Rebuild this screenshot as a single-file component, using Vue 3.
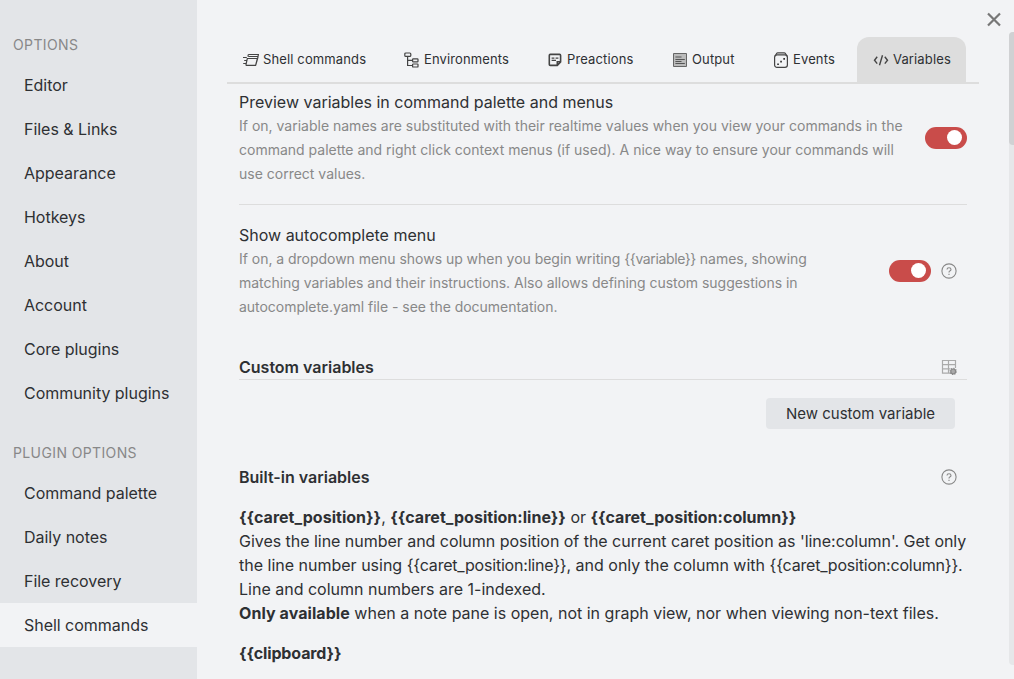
<script setup>
const groups = [
  { title: 'Options', items: ['Editor', 'Files & Links', 'Appearance', 'Hotkeys', 'About', 'Account', 'Core plugins', 'Community plugins'] },
  { title: 'Plugin options', items: ['Command palette', 'Daily notes', 'File recovery', 'Shell commands'] },
]
const selected = 'Shell commands'
const tabs = ['Shell commands', 'Environments', 'Preactions', 'Output', 'Events', 'Variables']
const activeTab = 'Variables'
const previewLines = [
  'If on, variable names are substituted with their realtime values when you view your commands in the',
  'command palette and right click context menus (if used). A nice way to ensure your commands will',
  'use correct values.',
]
const autocompleteLines = [
  'If on, a dropdown menu shows up when you begin writing {{variable}} names, showing',
  'matching variables and their instructions. Also allows defining custom suggestions in',
  'autocomplete.yaml file - see the documentation.',
]
const caretNames = ['{{caret_position}}', '{{caret_position:line}}', '{{caret_position:column}}']
const caretLines = [
  "Gives the line number and column position of the current caret position as 'line:column'. Get only",
  'the line number using {{caret_position:line}}, and only the column with {{caret_position:column}}.',
  'Line and column numbers are 1-indexed.',
]
const clipboardName = '{{clipboard}}'

// Splits a line so that every {{variable}} becomes a part of its own.
const parts = (line) => line.split(/(\{\{[^}]+\}\})/)
const isVariable = (part) => part.startsWith('{{')
</script>

<template>
  <div class="settings">
    <nav class="sidebar">
      <section v-for="g in groups" :key="g.title" class="group">
        <div class="group-title">{{ g.title }}</div>
        <div v-for="item in g.items" :key="item" class="nav-item" :class="{ selected: item === selected }">{{ item }}</div>
      </section>
    </nav>

    <main class="content">
      <div class="tabs">
        <div v-for="(tab, i) in tabs" :key="tab" class="tab" :class="['tab-' + i, { active: tab === activeTab }]">
          <svg v-if="i === 0" class="icon" width="16" height="16" viewBox="0 0 16 16">
            <path d="M5.3 2.5H15.4L14.6 6.5M5.3 4.5H15M5.3 2.5L4.9 4.5M4.3 6.5H14.4L12.6 13.3H3.4Q2.8 13.3 3 12.5ZM12.9 12.6L15 5M0 5.5H3.8M1.2 8.5H3.4M.2 11.5H3" />
          </svg>
          <svg v-else-if="i === 1" class="icon" width="16" height="16" viewBox="0 0 16 16">
            <rect x=".8" y="1" width="6" height="3.4" rx="1" /><rect x="8.6" y="6.8" width="5.4" height="3" rx=".6" /><rect x="8.6" y="12" width="5.4" height="3" rx=".6" />
            <path d="M3.6 4.4V13.5H8.6M3.6 8.3H8.6" />
          </svg>
          <svg v-else-if="i === 2" class="icon" width="16" height="16" viewBox="0 0 16 16">
            <path d="M3.3 2.4H12.6Q13.6 2.4 13.6 3.4V10L10.3 13.4H3.3Q2.3 13.4 2.3 12.4V3.4Q2.3 2.4 3.3 2.4ZM13.4 9.8H10.3V13.2" class="bold" /><path d="M4.6 6.2H7.4M8.6 6.2H11.4M4.6 8.4H9" />
          </svg>
          <svg v-else-if="i === 3" class="icon" width="16" height="16" viewBox="0 0 16 16">
            <path d="M1.5 1.5H14.5V14.5H1.5Z" class="sheet" />
            <path d="M3.4 5H9.5M3.4 7.5H12.8M3.4 9.5H9.5M3.4 11.5H12.8" class="rows" />
          </svg>
          <svg v-else-if="i === 4" class="icon" width="16" height="16" viewBox="0 0 16 16">
            <rect x="1.6" y="2.8" width="12.8" height="12.5" rx="2.4" /><path d="M2 4.2L3.6 1.5Q4 .8 4.8 .8H11.2Q12 .8 12.4 1.5L14 4.2" />
            <path d="M10.3 6h1.7v1.7h-1.7zM7.2 8.8h1.7v1.7H7.2zM4.2 11.4h1.7v1.7H4.2z" class="solid" />
          </svg>
          <svg v-else class="icon" width="16" height="16" viewBox="0 0 16 16">
            <path d="M4.2 4.8L1.5 8.2L4.2 11.6M11.8 4.8L14.5 8.2L11.8 11.6M9.5 3.2L6.5 13.2" class="code" />
          </svg>
          <span class="tab-label">{{ tab }}</span>
        </div>
      </div>

      <div class="pane">
        <div class="setting first">
          <div class="info">
            <div class="name">Preview variables in command palette and menus</div>
            <div v-for="line in previewLines" :key="line" class="desc">{{ line }}</div>
          </div>
          <div class="toggle"><i></i></div>
        </div>

        <div class="setting second">
          <div class="info">
            <div class="name">Show autocomplete menu</div>
            <div v-for="line in autocompleteLines" :key="line" class="desc tight"><span v-for="(part, n) in parts(line)" :key="n" :class="{ token: isVariable(part) }">{{ part }}</span></div>
          </div>
          <div class="toggle"><i></i></div>
          <svg class="help" width="16" height="16" viewBox="0 0 16 16">
            <circle cx="8" cy="8" r="7.1" /><path d="M6 6.5Q6 4.7 8 4.7T10 6.5Q10 7.5 8.8 8Q8 8.4 8 9.4M8 10.8V12" />
          </svg>
        </div>

        <div class="heading ruled">
          <span>Custom variables</span>
          <svg class="table-icon" width="16" height="16" viewBox="0 0 16 16">
            <path d="M9.5 14.2H1.5V1.5H14.5V9M1.5 5.7H14.5M1.5 9.8H9.5M7.5 1.5V14" />
            <circle cx="12.2" cy="12.4" r="2.4" class="gear" />
            <circle cx="12.2" cy="12.4" r="3.1" class="teeth" />
          </svg>
        </div>
        <div class="actions"><button class="new-button">New custom variable</button></div>

        <div class="heading">
          <span>Built-in variables</span>
          <svg class="help" width="16" height="16" viewBox="0 0 16 16">
            <circle cx="8" cy="8" r="7.1" /><path d="M6 6.5Q6 4.7 8 4.7T10 6.5Q10 7.5 8.8 8Q8 8.4 8 9.4M8 10.8V12" />
          </svg>
        </div>

        <div class="variable">
          <div class="names"><b>{{ caretNames[0] }}</b>, <b>{{ caretNames[1] }}</b> or <b>{{ caretNames[2] }}</b></div>
          <div v-for="(line, i) in caretLines" :key="line" :class="{ tight: i === 0 }"><span v-for="(part, n) in parts(line)" :key="n" :class="{ token: isVariable(part) }">{{ part }}</span></div>
          <div><b class="wide">Only available</b> when a note pane is open, not in graph view, nor when viewing non-text files.</div>
        </div>
        <div class="variable"><b class="clip">{{ clipboardName }}</b></div>
      </div>
    </main>

    <svg class="close" width="16" height="16" viewBox="0 0 16 16"><path d="M2 2.5L14 14.5M14 2.5L2 14.5" /></svg>
    <div class="scrollbar"><div class="thumb"></div></div>
  </div>
</template>

<style>
body { overflow: hidden; }
</style>

<style scoped>
.settings {
  position: relative;
  display: flex;
  width: 1014px;
  height: 679px;
  overflow: hidden;
  background: #f2f3f5;
  color: #2e3033;
  font: 400 16px/24px Inter, sans-serif;
  white-space: nowrap;
}
.sidebar { width: 197px; flex: none; box-sizing: border-box; padding-top: 27px; background: #e3e5e8; }
.group { margin-bottom: 20px; }
.group-title { height: 36px; padding-left: 13px; line-height: 36px; font-size: 14px; letter-spacing: .38px; text-transform: uppercase; color: #888; }
.nav-item { height: 44px; line-height: 44px; padding-left: 24px; letter-spacing: -.03px; }
.nav-item.selected { background: #f2f3f5; }
.content { flex: none; width: 752px; margin-left: 30px; }
.tabs { display: flex; height: 45px; margin-top: 37px; border-bottom: 2px solid #ddd; font-size: 13px; letter-spacing: .13px; }
.tab { display: flex; align-items: center; gap: 4px; box-sizing: border-box; padding-left: 16px; flex: none; }
.tab-label { margin-top: -2px; }
.tab-0 { width: 161px; }
.tab-1 { width: 143px; }
.tab-2 { width: 125px; }
.tab-3 { width: 101px; }
.tab-4 { width: 100px; }
.tab-5 { width: 109px; }
.tab.active { background: #ddd; border-radius: 12px 12px 0 0; }
.icon { flex: none; fill: none; stroke: #444; stroke-width: 1.2; }
.icon .bold { stroke-width: 1.6; }
.icon .sheet { fill: #bbb; stroke: #666; stroke-width: 1; }
.icon .rows { stroke: #555; stroke-width: 1; }
.icon .code { stroke-width: 1.4; }
.icon .solid { fill: #333; stroke: none; }
.pane { margin: 6px 12px 0; }
.setting { display: flex; align-items: center; height: 96px; }
.setting.first { padding-bottom: 18px; border-bottom: 1px solid #ddd; }
.setting.second { padding-top: 18px; padding-right: 10px; }
.info { flex: 1; width: 0; }
.desc { font-size: 14px; color: #888; }
.tight { letter-spacing: -.03px; }
.token { letter-spacing: -.2px; }
.desc .token { letter-spacing: -.38px; }
.toggle { width: 42px; height: 22px; border-radius: 11px; background: #c94c4a; flex: none; }
.toggle i { display: block; width: 15px; height: 15px; margin: 3px 0 0 22px; border-radius: 50%; background: #fff; }
.help { margin-left: 10px; flex: none; fill: none; stroke: #888; stroke-width: 1.1; }
.heading { display: flex; align-items: center; justify-content: space-between; height: 24px; padding-right: 10px; font-weight: 600; }
.heading.ruled { margin-top: 36px; border-bottom: 1px solid #ddd; }
.table-icon { overflow: visible; fill: none; stroke: #aaa; stroke-width: 1.2; }
.table-icon .gear { fill: #aaa; stroke: #888; }
.table-icon .teeth { stroke: #888; stroke-dasharray: 1.2 1.2; }
.actions { display: flex; justify-content: flex-end; padding: 18px 12px 36px 0; }
.new-button { width: 189px; height: 31px; padding: 0; border: 0; border-radius: 4px; background: #e3e5e8; color: inherit; font: 400 15px/31px Inter, sans-serif; }
.variable { margin-top: 16px; }
.variable b { font-weight: 700; letter-spacing: .03px; }
.variable b.wide { letter-spacing: .07px; }
.variable b.clip { letter-spacing: -.12px; }
.close { position: absolute; left: 986px; top: 11px; stroke: #777; stroke-width: 2.2; }
.scrollbar { position: absolute; left: 1009px; top: 32px; width: 10px; height: 633px; border-radius: 4px; background: #e6e7e9; }
.thumb { height: 113px; border-radius: 4px; background: #d0d1d3; }
</style>
